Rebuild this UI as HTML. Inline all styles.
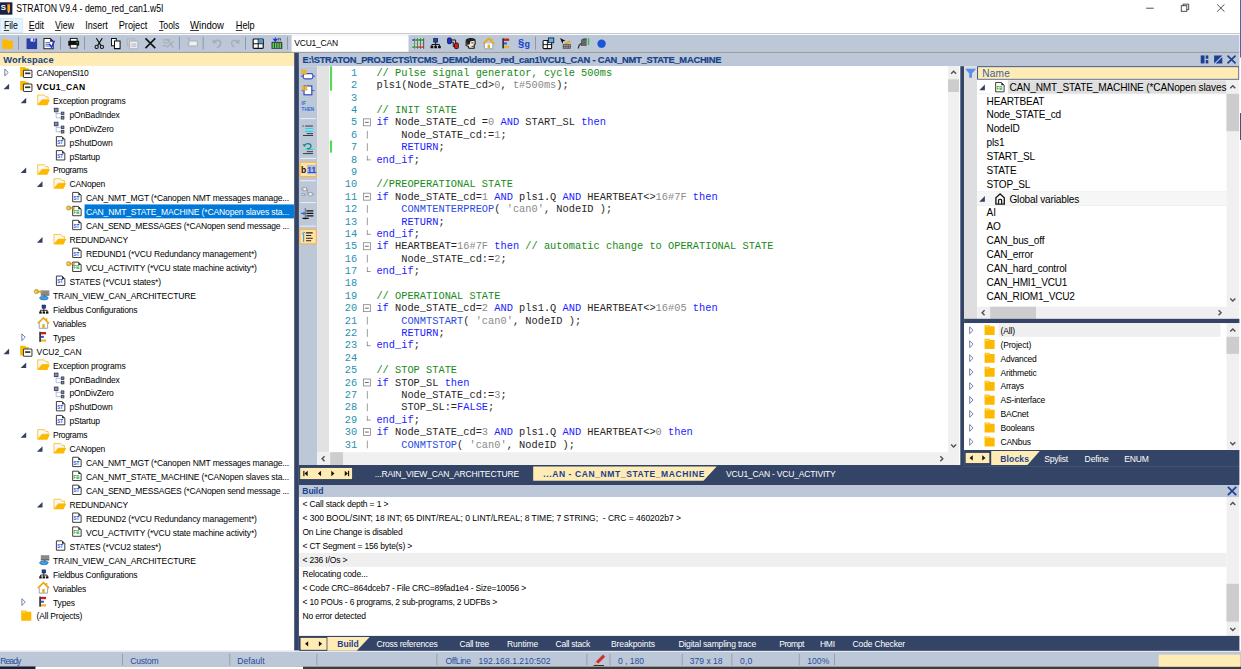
<!DOCTYPE html>
<html><head><meta charset="utf-8"><title>STRATON V9.4 - demo_red_can1.w5I</title>
<style>
html,body{margin:0;padding:0;background:#fff;overflow:hidden;}
body{width:1241px;height:669px;position:relative;font-family:"Liberation Sans",sans-serif;}
#root{position:absolute;left:0;top:0;width:1600px;height:864px;transform:scale(0.775625,0.774306);transform-origin:0 0;background:#fff;overflow:hidden;}
#root div,#root span.t,#root svg{position:absolute;box-sizing:border-box;}
#root svg{overflow:visible;}
span.t{white-space:pre;color:#000;}
.mono{font-family:"Liberation Mono",monospace;}
.ln,.cl{font-family:"Liberation Mono",monospace;font-size:13.33px;line-height:16px;height:16px;}
.ln{text-align:right;}
span.t.ln{color:#2b91af;}
.cl b{font-weight:normal;}
span.t.cl{color:#262626;}

</style></head><body><div id="root">
<svg style="left:0;top:0" width="1600" height="864" viewBox="0 0 1600 864">
<rect x="0.00" y="0.00" width="1600.00" height="23.25" fill="#fff"/>
<rect x="0.00" y="23.25" width="1600.00" height="19.50" fill="#fff"/>
<rect x="0.50" y="23.75" width="28.91" height="18.11" rx="0.0" fill="#e5f3ff" stroke="#cce8ff" stroke-width="1.0"/>
<rect x="0.00" y="42.75" width="1600.00" height="1.03" fill="#b4b4b4"/>
<rect x="0.00" y="43.78" width="1600.00" height="1.29" fill="#fff"/>
<rect x="0.00" y="45.07" width="1600.00" height="21.76" fill="#bcc7d8"/>
<rect x="0.00" y="66.83" width="1600.00" height="1.49" fill="#909090"/>
<rect x="375.95" y="45.46" width="150.72" height="21.37" fill="#fff"/>
<rect x="0.00" y="68.32" width="379.44" height="16.79" fill="#ffebb4"/>
<rect x="0.00" y="85.11" width="379.44" height="755.26" fill="#fff"/>
<rect x="379.31" y="68.32" width="6.06" height="772.05" fill="#334466"/>
<rect x="385.37" y="68.32" width="1214.63" height="17.31" fill="#bcc7d8"/>
<rect x="0.00" y="840.37" width="1600.00" height="20.53" fill="#bcc7d8"/>
<rect x="0.00" y="840.37" width="1600.00" height="1.42" fill="#eef1f6"/>
<rect x="0.00" y="860.90" width="1600.00" height="3.10" fill="#3c3c3c"/>
<rect x="0.00" y="860.90" width="45.77" height="3.10" fill="#14213d"/>
<rect x="45.77" y="860.90" width="344.88" height="3.10" fill="#fff"/>
<rect x="385.50" y="85.50" width="23.46" height="515.04" fill="#bcc7d8"/>
<rect x="408.96" y="85.50" width="15.47" height="498.51" fill="#e2e2e2"/>
<rect x="424.43" y="85.50" width="797.81" height="498.51" fill="#fff"/>
<rect x="425.33" y="85.63" width="2.84" height="31.48" fill="#5ad65a"/>
<rect x="425.33" y="181.50" width="2.84" height="15.61" fill="#5ad65a"/>
<rect x="1222.24" y="85.50" width="14.57" height="498.51" fill="#f0f0f0"/>
<rect x="1222.24" y="102.41" width="14.57" height="16.40" fill="#cdcdcd"/>
<rect x="408.96" y="584.01" width="827.85" height="16.53" fill="#f0f0f0"/>
<rect x="425.72" y="584.01" width="16.50" height="16.53" fill="#cdcdcd"/>
<rect x="1222.24" y="584.01" width="14.57" height="16.53" fill="#f0f0f0"/>
<rect x="1236.81" y="85.50" width="1.29" height="515.04" fill="#fff"/>
<rect x="1238.10" y="85.50" width="4.90" height="515.30" fill="#334466"/>
<rect x="1243.00" y="85.50" width="16.76" height="326.23" fill="#dedede"/>
<rect x="1260.36" y="86.10" width="336.85" height="16.36" rx="0.0" fill="#ffebb4" stroke="#2f4a86" stroke-width="1.2"/>
<rect x="1259.76" y="103.06" width="321.55" height="293.04" fill="#fff"/>
<rect x="1299.34" y="103.71" width="281.97" height="17.35" fill="#dfdfdf"/>
<rect x="1259.76" y="120.80" width="321.55" height="0.90" fill="#ececec"/>
<rect x="1259.76" y="247.71" width="321.55" height="18.00" fill="#f6f6f6"/>
<rect x="1259.76" y="246.80" width="321.55" height="0.90" fill="#ececec"/>
<rect x="1259.76" y="264.80" width="321.55" height="0.90" fill="#ececec"/>
<rect x="1581.31" y="103.06" width="16.50" height="293.04" fill="#f0f0f0"/>
<rect x="1581.31" y="121.14" width="16.50" height="48.30" fill="#cdcdcd"/>
<rect x="1259.76" y="396.10" width="338.05" height="15.63" fill="#f0f0f0"/>
<rect x="1276.65" y="396.10" width="59.05" height="15.63" fill="#cdcdcd"/>
<rect x="1243.00" y="411.72" width="357.00" height="5.68" fill="#334466"/>
<rect x="1243.00" y="417.41" width="338.31" height="163.24" fill="#fff"/>
<rect x="1287.61" y="417.41" width="285.96" height="17.61" fill="#efefef"/>
<rect x="1581.31" y="417.41" width="16.50" height="163.24" fill="#f0f0f0"/>
<rect x="1581.31" y="434.97" width="16.50" height="21.96" fill="#cdcdcd"/>
<rect x="1243.00" y="581.17" width="357.00" height="20.02" fill="#334466"/>
<rect x="1244.40" y="584.25" width="31.75" height="14.37" rx="0.0" fill="#ffebb4" stroke="#2a3550" stroke-width="1.0"/>
<rect x="385.50" y="600.54" width="1214.50" height="25.83" fill="#334466"/>
<rect x="1243.00" y="601.83" width="354.94" height="1.03" fill="#43557c"/>
<rect x="386.51" y="603.62" width="68.11" height="15.79" rx="0.0" fill="#ffebb4" stroke="#2a3550" stroke-width="1.0"/>
<rect x="385.50" y="626.37" width="1214.50" height="15.50" fill="#bcc7d8"/>
<rect x="385.50" y="641.87" width="1195.81" height="179.39" fill="#fff"/>
<rect x="385.50" y="713.99" width="1195.81" height="18.00" fill="#efefef"/>
<rect x="1581.31" y="641.87" width="16.50" height="179.39" fill="#f0f0f0"/>
<rect x="1581.31" y="753.97" width="16.50" height="48.82" fill="#cdcdcd"/>
<rect x="1597.81" y="625.85" width="2.19" height="195.40" fill="#fff"/>
<rect x="385.50" y="821.25" width="1214.50" height="19.24" fill="#334466"/>
<rect x="386.90" y="823.17" width="34.71" height="16.56" rx="0.0" fill="#ffebb4" stroke="#2a3550" stroke-width="1.0"/>
<rect x="157.55" y="844.11" width="1.03" height="15.24" fill="#8d97a8"/>
<rect x="295.76" y="844.11" width="1.03" height="15.24" fill="#8d97a8"/>
<rect x="408.06" y="844.11" width="1.03" height="15.24" fill="#8d97a8"/>
<rect x="562.77" y="844.11" width="1.03" height="15.24" fill="#8d97a8"/>
<rect x="756.16" y="844.11" width="1.03" height="15.24" fill="#8d97a8"/>
<rect x="785.95" y="844.11" width="1.03" height="15.24" fill="#8d97a8"/>
<rect x="879.03" y="844.11" width="1.03" height="15.24" fill="#8d97a8"/>
<rect x="943.11" y="844.11" width="1.03" height="15.24" fill="#8d97a8"/>
<rect x="1029.88" y="844.11" width="1.03" height="15.24" fill="#8d97a8"/>
<rect x="1075.52" y="844.11" width="1.03" height="15.24" fill="#8d97a8"/>
<rect x="1493.89" y="845.40" width="105.08" height="15.50" fill="#ffebb4"/>
<rect x="23.21" y="47.27" width="1.16" height="16.79" fill="#8a93a3"/>
<rect x="77.36" y="47.27" width="1.16" height="16.79" fill="#8a93a3"/>
<rect x="108.30" y="47.27" width="1.16" height="16.79" fill="#8a93a3"/>
<rect x="230.65" y="47.27" width="1.16" height="16.79" fill="#8a93a3"/>
<rect x="261.34" y="47.27" width="1.16" height="16.79" fill="#8a93a3"/>
<rect x="315.87" y="47.27" width="1.16" height="16.79" fill="#8a93a3"/>
<rect x="370.02" y="47.27" width="1.16" height="16.79" fill="#8a93a3"/>
<rect x="689.77" y="47.27" width="1.16" height="16.79" fill="#8a93a3"/>
<rect x="387.30" y="152.52" width="19.85" height="1.29" fill="#eef1f6"/>
<rect x="387.30" y="203.92" width="19.85" height="1.29" fill="#eef1f6"/>
<rect x="386.55" y="209.50" width="21.35" height="18.68" rx="2.0" fill="#ffe3a6" stroke="#f5b45a" stroke-width="1.6"/>
<rect x="387.30" y="232.72" width="19.85" height="1.29" fill="#eef1f6"/>
<rect x="387.30" y="261.01" width="19.85" height="1.29" fill="#eef1f6"/>
<rect x="387.30" y="291.36" width="19.85" height="1.29" fill="#eef1f6"/>
<rect x="386.55" y="296.29" width="21.35" height="18.55" rx="2.0" fill="#ffe3a6" stroke="#f5b45a" stroke-width="1.6"/>
<rect x="1597.94" y="43.91" width="2.06" height="796.58" fill="#fff"/>
<rect x="1598.97" y="0.00" width="1.03" height="74.26" fill="#1f3f8f"/>
<rect x="1598.97" y="145.94" width="1.03" height="34.87" fill="#1a2744"/>
</svg>
<svg style="left:0px;top:3px" width="16" height="16" viewBox="0 0 16 16"><rect width="16" height="16" fill="#1a2340"/><text x="1" y="10.5" font-family="Liberation Sans,sans-serif" font-weight="bold" font-size="10" fill="#fff">S</text><rect x="9.5" y="3" width="3.4" height="8" fill="#f5a81c"/><path d="M9.5 11h3.4l-1.7 3.5z" fill="#f3d9a0"/><rect x="9.5" y="2" width="3.4" height="1.6" fill="#e05a5a"/></svg>
<span class="t" style="left:20.89px;top:1.99px;font-size:13.6px;line-height:19px;transform:scaleX(0.8228);transform-origin:0 50%;">STRATON V9.4 - demo_red_can1.w5I</span>
<svg style="left:1471.1px;top:0" width="128.9" height="23" viewBox="0 0 100 18" preserveAspectRatio="none"><g stroke="#222" stroke-width="0.8" fill="none"><path d="M5.2 8.3h7.6"/><rect x="40.3" y="5.8" width="5.6" height="5.6"/><path d="M42.2 5.8v-1.6h5.6v5.6h-1.9"/><path d="M76.2 4.4l7.4 7.4M83.6 4.4l-7.4 7.4"/></g></svg>
<span class="t" style="left:4.64px;top:23.56px;font-size:13.6px;line-height:19px;transform:scaleX(0.8236);transform-origin:0 50%;"><u>F</u>ile</span>
<span class="t" style="left:37.13px;top:23.56px;font-size:13.6px;line-height:19px;transform:scaleX(0.8472);transform-origin:0 50%;"><u>E</u>dit</span>
<span class="t" style="left:71.17px;top:23.56px;font-size:13.6px;line-height:19px;transform:scaleX(0.8380);transform-origin:0 50%;"><u>V</u>iew</span>
<span class="t" style="left:110.36px;top:23.56px;font-size:13.6px;line-height:19px;transform:scaleX(0.8491);transform-origin:0 50%;">Insert</span>
<span class="t" style="left:153.17px;top:23.56px;font-size:13.6px;line-height:19px;transform:scaleX(0.8742);transform-origin:0 50%;">Project</span>
<span class="t" style="left:204.74px;top:23.56px;font-size:13.6px;line-height:19px;transform:scaleX(0.8284);transform-origin:0 50%;"><u>T</u>ools</span>
<span class="t" style="left:245.22px;top:23.56px;font-size:13.6px;line-height:19px;transform:scaleX(0.9062);transform-origin:0 50%;"><u>W</u>indow</span>
<span class="t" style="left:303.76px;top:23.56px;font-size:13.6px;line-height:19px;transform:scaleX(0.8712);transform-origin:0 50%;"><u>H</u>elp</span>
<span class="t" style="left:379.44px;top:48.29px;font-size:11px;line-height:15px;letter-spacing:-0.325px;">VCU1_CAN</span>
<span class="t" style="left:4.13px;top:68.73px;font-size:12px;line-height:17px;color:#15428b;font-weight:bold;letter-spacing:0.144px;">Workspace</span>
<svg style="left:4.38px;top:87.93px" width="10" height="12" viewBox="0 0 10 12"><path d="M2.2 1.2l4.4 4.4-4.4 4.4z" fill="#fff" stroke="#5a6c9c" stroke-width="1.1"/></svg>
<svg style="left:26.30px;top:85.33px" width="16" height="16" viewBox="0 0 16 16"><path d="M0 1.5h6.5l1 1.5h3.5v11H0z" fill="#fdb900"/><rect x="4.2" y="5.6" width="11" height="9.6" rx="1.2" fill="#fff" stroke="#3a3a3a" stroke-width="1.3"/><rect x="6.3" y="8.6" width="6.8" height="2.2" fill="#333"/></svg>
<span class="t" style="left:47.19px;top:86.83px;font-size:11px;line-height:15px;letter-spacing:-0.298px;">CANopenSI10</span>
<svg style="left:4.38px;top:105.53px" width="10" height="12" viewBox="0 0 10 12"><path d="M7.8 2.2v7.2H0.6z" fill="#33415f"/></svg>
<svg style="left:26.30px;top:103.33px" width="16" height="16" viewBox="0 0 16 16"><path d="M0 1.5h6.5l1 1.5h3.5v11H0z" fill="#fdb900"/><rect x="4.2" y="5.6" width="11" height="9.6" rx="1.2" fill="#fff" stroke="#3a3a3a" stroke-width="1.3"/><rect x="6.3" y="8.6" width="6.8" height="2.2" fill="#333"/></svg>
<span class="t" style="left:47.19px;top:104.83px;font-size:11px;line-height:15px;font-weight:bold;letter-spacing:0.485px;">VCU1_CAN</span>
<svg style="left:25.59px;top:123.53px" width="10" height="12" viewBox="0 0 10 12"><path d="M7.8 2.2v7.2H0.6z" fill="#33415f"/></svg>
<svg style="left:47.51px;top:121.33px" width="16" height="16" viewBox="0 0 16 16"><path d="M0.6 14.2V1.8h8.6l1.7 2.4h3.2v3.6H6.2z" fill="#f6f8fb" stroke="#fdc42c" stroke-width="1.2"/><path d="M0.4 14.8L6 7.7h10.4l-3.4 7.1z" fill="#fdb900"/></svg>
<span class="t" style="left:68.40px;top:122.83px;font-size:11px;line-height:15px;letter-spacing:-0.242px;">Exception programs</span>
<svg style="left:68.72px;top:139.33px" width="16" height="16" viewBox="0 0 16 16"><g fill="none" stroke="#8ea4dc" stroke-width="0.9"><path d="M3.4 4v9.2h6.4M3.4 7.6h6.4"/></g><rect x="1" y="0.8" width="4.8" height="4.6" fill="#7b8fc4" stroke="#333" stroke-width="1"/><rect x="10" y="5.8" width="3.4" height="3.4" fill="#7b8fc4" stroke="#333" stroke-width="1"/><rect x="10" y="11.4" width="3.4" height="3.4" fill="#7b8fc4" stroke="#333" stroke-width="1"/></svg>
<span class="t" style="left:89.61px;top:140.83px;font-size:11px;line-height:15px;letter-spacing:-0.232px;">pOnBadIndex</span>
<svg style="left:68.72px;top:157.33px" width="16" height="16" viewBox="0 0 16 16"><g fill="none" stroke="#8ea4dc" stroke-width="0.9"><path d="M3.4 4v9.2h6.4M3.4 7.6h6.4"/></g><rect x="1" y="0.8" width="4.8" height="4.6" fill="#7b8fc4" stroke="#333" stroke-width="1"/><rect x="10" y="5.8" width="3.4" height="3.4" fill="#7b8fc4" stroke="#333" stroke-width="1"/><rect x="10" y="11.4" width="3.4" height="3.4" fill="#7b8fc4" stroke="#333" stroke-width="1"/></svg>
<span class="t" style="left:89.61px;top:158.83px;font-size:11px;line-height:15px;letter-spacing:-0.244px;">pOnDivZero</span>
<svg style="left:68.72px;top:175.33px" width="16" height="16" viewBox="0 0 16 16"><path d="M3.7 1.5h7.4l3.5 3.5v8.6H3.7z" fill="#fff" stroke="#2e2e2e" stroke-width="1.2"/><path d="M10.9 1.5v3.7h3.7z" fill="#2e2e2e"/><text x="4.7" y="11.0" font-family="Liberation Sans,sans-serif" font-weight="bold" font-size="6.2" fill="#2a50d8" textLength="7.6" lengthAdjust="spacingAndGlyphs">ST</text></svg>
<span class="t" style="left:89.61px;top:176.83px;font-size:11px;line-height:15px;letter-spacing:-0.130px;">pShutDown</span>
<svg style="left:68.72px;top:193.33px" width="16" height="16" viewBox="0 0 16 16"><path d="M3.7 1.5h7.4l3.5 3.5v8.6H3.7z" fill="#fff" stroke="#2e2e2e" stroke-width="1.2"/><path d="M10.9 1.5v3.7h3.7z" fill="#2e2e2e"/><text x="4.7" y="11.0" font-family="Liberation Sans,sans-serif" font-weight="bold" font-size="6.2" fill="#2a50d8" textLength="7.6" lengthAdjust="spacingAndGlyphs">ST</text></svg>
<span class="t" style="left:89.61px;top:194.83px;font-size:11px;line-height:15px;letter-spacing:-0.331px;">pStartup</span>
<svg style="left:25.59px;top:213.53px" width="10" height="12" viewBox="0 0 10 12"><path d="M7.8 2.2v7.2H0.6z" fill="#33415f"/></svg>
<svg style="left:47.51px;top:211.33px" width="16" height="16" viewBox="0 0 16 16"><path d="M0.6 14.2V1.8h8.6l1.7 2.4h3.2v3.6H6.2z" fill="#f6f8fb" stroke="#fdc42c" stroke-width="1.2"/><path d="M0.4 14.8L6 7.7h10.4l-3.4 7.1z" fill="#fdb900"/></svg>
<span class="t" style="left:68.40px;top:212.83px;font-size:11px;line-height:15px;letter-spacing:-0.465px;">Programs</span>
<svg style="left:46.80px;top:231.53px" width="10" height="12" viewBox="0 0 10 12"><path d="M7.8 2.2v7.2H0.6z" fill="#33415f"/></svg>
<svg style="left:68.72px;top:229.33px" width="16" height="16" viewBox="0 0 16 16"><path d="M0.6 14.2V1.8h8.6l1.7 2.4h3.2v3.6H6.2z" fill="#f6f8fb" stroke="#fdc42c" stroke-width="1.2"/><path d="M0.4 14.8L6 7.7h10.4l-3.4 7.1z" fill="#fdb900"/></svg>
<span class="t" style="left:89.61px;top:230.83px;font-size:11px;line-height:15px;letter-spacing:-0.257px;">CANopen</span>
<svg style="left:89.93px;top:247.33px" width="16" height="16" viewBox="0 0 16 16"><path d="M3.7 1.5h7.4l3.5 3.5v8.6H3.7z" fill="#fff" stroke="#2e2e2e" stroke-width="1.2"/><path d="M10.9 1.5v3.7h3.7z" fill="#2e2e2e"/><text x="4.7" y="11.0" font-family="Liberation Sans,sans-serif" font-weight="bold" font-size="6.2" fill="#2a50d8" textLength="7.6" lengthAdjust="spacingAndGlyphs">ST</text></svg>
<span class="t" style="left:110.81px;top:248.83px;font-size:11px;line-height:15px;letter-spacing:-0.212px;">CAN_NMT_MGT (*Canopen NMT messages manage...</span>
<div style="left:108.51px;top:264.33px;width:270.92px;height:18px;background:#0078d7;"></div>
<svg style="left:84.93px;top:265.33px" width="21" height="16" viewBox="-5 0 21 16"><path d="M3.7 1.5h7.4l3.5 3.5v8.6H3.7z" fill="#fff" stroke="#2e2e2e" stroke-width="1.2"/><path d="M10.9 1.5v3.7h3.7z" fill="#2e2e2e"/><text x="4.7" y="11.0" font-family="Liberation Sans,sans-serif" font-weight="bold" font-size="6.2" fill="#28a428" textLength="7.6" lengthAdjust="spacingAndGlyphs">FB</text><g fill="#e2b32a" stroke="#a8821a" stroke-width="0.5"><circle cx="-1.6" cy="3.6" r="2.9"/><path d="M1 2.9h5.2v1.4H5.4v1.5H4.2V4.3H1z"/></g><circle cx="-2.3" cy="3.6" r="0.9" fill="#fff3c8"/></svg>
<span class="t" style="left:110.81px;top:266.83px;font-size:11px;line-height:15px;color:#fff;letter-spacing:-0.179px;">CAN_NMT_STATE_MACHINE (*CANopen slaves sta...</span>
<svg style="left:89.93px;top:283.33px" width="16" height="16" viewBox="0 0 16 16"><path d="M3.7 1.5h7.4l3.5 3.5v8.6H3.7z" fill="#fff" stroke="#2e2e2e" stroke-width="1.2"/><path d="M10.9 1.5v3.7h3.7z" fill="#2e2e2e"/><text x="4.7" y="11.0" font-family="Liberation Sans,sans-serif" font-weight="bold" font-size="6.2" fill="#2a50d8" textLength="7.6" lengthAdjust="spacingAndGlyphs">ST</text></svg>
<span class="t" style="left:110.81px;top:284.83px;font-size:11px;line-height:15px;letter-spacing:-0.263px;">CAN_SEND_MESSAGES (*CANopen send message ...</span>
<svg style="left:46.80px;top:303.53px" width="10" height="12" viewBox="0 0 10 12"><path d="M7.8 2.2v7.2H0.6z" fill="#33415f"/></svg>
<svg style="left:68.72px;top:301.33px" width="16" height="16" viewBox="0 0 16 16"><path d="M0.6 14.2V1.8h8.6l1.7 2.4h3.2v3.6H6.2z" fill="#f6f8fb" stroke="#fdc42c" stroke-width="1.2"/><path d="M0.4 14.8L6 7.7h10.4l-3.4 7.1z" fill="#fdb900"/></svg>
<span class="t" style="left:89.61px;top:302.83px;font-size:11px;line-height:15px;letter-spacing:-0.220px;">REDUNDANCY</span>
<svg style="left:89.93px;top:319.33px" width="16" height="16" viewBox="0 0 16 16"><path d="M3.7 1.5h7.4l3.5 3.5v8.6H3.7z" fill="#fff" stroke="#2e2e2e" stroke-width="1.2"/><path d="M10.9 1.5v3.7h3.7z" fill="#2e2e2e"/><text x="4.7" y="11.0" font-family="Liberation Sans,sans-serif" font-weight="bold" font-size="6.2" fill="#2a50d8" textLength="7.6" lengthAdjust="spacingAndGlyphs">ST</text></svg>
<span class="t" style="left:110.81px;top:320.83px;font-size:11px;line-height:15px;letter-spacing:-0.195px;">REDUND1 (*VCU Redundancy management*)</span>
<svg style="left:84.93px;top:337.33px" width="21" height="16" viewBox="-5 0 21 16"><path d="M3.7 1.5h7.4l3.5 3.5v8.6H3.7z" fill="#fff" stroke="#2e2e2e" stroke-width="1.2"/><path d="M10.9 1.5v3.7h3.7z" fill="#2e2e2e"/><text x="4.7" y="11.0" font-family="Liberation Sans,sans-serif" font-weight="bold" font-size="6.2" fill="#28a428" textLength="7.6" lengthAdjust="spacingAndGlyphs">FB</text><g fill="#e2b32a" stroke="#a8821a" stroke-width="0.5"><circle cx="-1.6" cy="3.6" r="2.9"/><path d="M1 2.9h5.2v1.4H5.4v1.5H4.2V4.3H1z"/></g><circle cx="-2.3" cy="3.6" r="0.9" fill="#fff3c8"/></svg>
<span class="t" style="left:110.81px;top:338.83px;font-size:11px;line-height:15px;letter-spacing:-0.205px;">VCU_ACTIVITY (*VCU state machine activity*)</span>
<svg style="left:68.72px;top:355.33px" width="16" height="16" viewBox="0 0 16 16"><path d="M3.7 1.5h7.4l3.5 3.5v8.6H3.7z" fill="#fff" stroke="#2e2e2e" stroke-width="1.2"/><path d="M10.9 1.5v3.7h3.7z" fill="#2e2e2e"/><text x="4.7" y="11.0" font-family="Liberation Sans,sans-serif" font-weight="bold" font-size="6.2" fill="#2a50d8" textLength="7.6" lengthAdjust="spacingAndGlyphs">ST</text></svg>
<span class="t" style="left:89.61px;top:356.83px;font-size:11px;line-height:15px;letter-spacing:-0.182px;">STATES (*VCU1 states*)</span>
<svg style="left:42.51px;top:373.33px" width="21" height="16" viewBox="-5 0 21 16"><rect x="4.6" y="2" width="11" height="5.4" fill="#8a8a8a"/><path d="M4.6 7.4h11v1.3h-11z" fill="#333"/><path d="M9.6 8.6v2" stroke="#333" stroke-width="1.4"/><ellipse cx="8.6" cy="11.9" rx="5.6" ry="2.4" fill="#3aa0e8" stroke="#1f5fa8" stroke-width="0.8"/><g transform="translate(0.5,0)"><g fill="#e2b32a" stroke="#a8821a" stroke-width="0.5"><circle cx="-1.6" cy="3.6" r="2.9"/><path d="M1 2.9h5.2v1.4H5.4v1.5H4.2V4.3H1z"/></g><circle cx="-2.3" cy="3.6" r="0.9" fill="#fff3c8"/></g></svg>
<span class="t" style="left:68.40px;top:374.83px;font-size:11px;line-height:15px;letter-spacing:-0.176px;">TRAIN_VIEW_CAN_ARCHITECTURE</span>
<svg style="left:47.51px;top:391.33px" width="16" height="16" viewBox="0 0 16 16"><g transform="translate(2.1,2.2) scale(0.8)"><rect x="5.2" y="1" width="5.6" height="5" fill="#1d3fd0" stroke="#111" stroke-width="1"/><path d="M8 6v3.2M2.6 12V9.4h10.8V12M8 9.4V12" stroke="#111" stroke-width="1.4" fill="none"/><rect x="0.6" y="11.4" width="4" height="3.4" fill="#111"/><rect x="6" y="11.4" width="4" height="3.4" fill="#111"/><rect x="11.4" y="11.4" width="4" height="3.4" fill="#111"/></g></svg>
<span class="t" style="left:68.40px;top:392.83px;font-size:11px;line-height:15px;letter-spacing:-0.305px;">Fieldbus Configurations</span>
<svg style="left:47.51px;top:409.33px" width="16" height="16" viewBox="0 0 16 16"><path d="M2.6 8.2V15h10.8V8.2" fill="#fff" stroke="#8a96a8" stroke-width="1.1"/><path d="M0.8 8.6L8 1.6l7.2 7" fill="none" stroke="#e9a818" stroke-width="2.2" stroke-linejoin="miter"/><rect x="11" y="2" width="2" height="3.4" fill="#e9a818"/><rect x="6.6" y="9.6" width="3" height="5" fill="#e9a818"/></svg>
<span class="t" style="left:68.40px;top:410.83px;font-size:11px;line-height:15px;letter-spacing:-0.292px;">Variables</span>
<svg style="left:25.59px;top:429.93px" width="10" height="12" viewBox="0 0 10 12"><path d="M2.2 1.2l4.4 4.4-4.4 4.4z" fill="#fff" stroke="#5a6c9c" stroke-width="1.1"/></svg>
<svg style="left:47.51px;top:427.33px" width="16" height="16" viewBox="0 0 16 16"><rect x="2.6" y="1.5" width="2.2" height="13" fill="#333"/><rect x="4.8" y="1.8" width="6.6" height="3" fill="#c81e1e"/><rect x="4.8" y="6.8" width="3.8" height="2.6" fill="#2a5ad8"/><rect x="4.8" y="11.4" width="6.6" height="2.8" fill="#f0b428"/></svg>
<span class="t" style="left:68.40px;top:428.83px;font-size:11px;line-height:15px;letter-spacing:-0.223px;">Types</span>
<svg style="left:4.38px;top:447.53px" width="10" height="12" viewBox="0 0 10 12"><path d="M7.8 2.2v7.2H0.6z" fill="#33415f"/></svg>
<svg style="left:26.30px;top:445.33px" width="16" height="16" viewBox="0 0 16 16"><path d="M0 1.5h6.5l1 1.5h3.5v11H0z" fill="#fdb900"/><rect x="4.2" y="5.6" width="11" height="9.6" rx="1.2" fill="#fff" stroke="#3a3a3a" stroke-width="1.3"/><rect x="6.3" y="8.6" width="6.8" height="2.2" fill="#333"/></svg>
<span class="t" style="left:47.19px;top:446.83px;font-size:11px;line-height:15px;letter-spacing:-0.084px;">VCU2_CAN</span>
<svg style="left:25.59px;top:465.53px" width="10" height="12" viewBox="0 0 10 12"><path d="M7.8 2.2v7.2H0.6z" fill="#33415f"/></svg>
<svg style="left:47.51px;top:463.33px" width="16" height="16" viewBox="0 0 16 16"><path d="M0.6 14.2V1.8h8.6l1.7 2.4h3.2v3.6H6.2z" fill="#f6f8fb" stroke="#fdc42c" stroke-width="1.2"/><path d="M0.4 14.8L6 7.7h10.4l-3.4 7.1z" fill="#fdb900"/></svg>
<span class="t" style="left:68.40px;top:464.83px;font-size:11px;line-height:15px;letter-spacing:-0.242px;">Exception programs</span>
<svg style="left:68.72px;top:481.33px" width="16" height="16" viewBox="0 0 16 16"><g fill="none" stroke="#8ea4dc" stroke-width="0.9"><path d="M3.4 4v9.2h6.4M3.4 7.6h6.4"/></g><rect x="1" y="0.8" width="4.8" height="4.6" fill="#7b8fc4" stroke="#333" stroke-width="1"/><rect x="10" y="5.8" width="3.4" height="3.4" fill="#7b8fc4" stroke="#333" stroke-width="1"/><rect x="10" y="11.4" width="3.4" height="3.4" fill="#7b8fc4" stroke="#333" stroke-width="1"/></svg>
<span class="t" style="left:89.61px;top:482.83px;font-size:11px;line-height:15px;letter-spacing:-0.232px;">pOnBadIndex</span>
<svg style="left:68.72px;top:499.33px" width="16" height="16" viewBox="0 0 16 16"><g fill="none" stroke="#8ea4dc" stroke-width="0.9"><path d="M3.4 4v9.2h6.4M3.4 7.6h6.4"/></g><rect x="1" y="0.8" width="4.8" height="4.6" fill="#7b8fc4" stroke="#333" stroke-width="1"/><rect x="10" y="5.8" width="3.4" height="3.4" fill="#7b8fc4" stroke="#333" stroke-width="1"/><rect x="10" y="11.4" width="3.4" height="3.4" fill="#7b8fc4" stroke="#333" stroke-width="1"/></svg>
<span class="t" style="left:89.61px;top:500.83px;font-size:11px;line-height:15px;letter-spacing:-0.244px;">pOnDivZero</span>
<svg style="left:68.72px;top:517.33px" width="16" height="16" viewBox="0 0 16 16"><path d="M3.7 1.5h7.4l3.5 3.5v8.6H3.7z" fill="#fff" stroke="#2e2e2e" stroke-width="1.2"/><path d="M10.9 1.5v3.7h3.7z" fill="#2e2e2e"/><text x="4.7" y="11.0" font-family="Liberation Sans,sans-serif" font-weight="bold" font-size="6.2" fill="#2a50d8" textLength="7.6" lengthAdjust="spacingAndGlyphs">ST</text></svg>
<span class="t" style="left:89.61px;top:518.83px;font-size:11px;line-height:15px;letter-spacing:-0.130px;">pShutDown</span>
<svg style="left:68.72px;top:535.33px" width="16" height="16" viewBox="0 0 16 16"><path d="M3.7 1.5h7.4l3.5 3.5v8.6H3.7z" fill="#fff" stroke="#2e2e2e" stroke-width="1.2"/><path d="M10.9 1.5v3.7h3.7z" fill="#2e2e2e"/><text x="4.7" y="11.0" font-family="Liberation Sans,sans-serif" font-weight="bold" font-size="6.2" fill="#2a50d8" textLength="7.6" lengthAdjust="spacingAndGlyphs">ST</text></svg>
<span class="t" style="left:89.61px;top:536.83px;font-size:11px;line-height:15px;letter-spacing:-0.331px;">pStartup</span>
<svg style="left:25.59px;top:555.53px" width="10" height="12" viewBox="0 0 10 12"><path d="M7.8 2.2v7.2H0.6z" fill="#33415f"/></svg>
<svg style="left:47.51px;top:553.33px" width="16" height="16" viewBox="0 0 16 16"><path d="M0.6 14.2V1.8h8.6l1.7 2.4h3.2v3.6H6.2z" fill="#f6f8fb" stroke="#fdc42c" stroke-width="1.2"/><path d="M0.4 14.8L6 7.7h10.4l-3.4 7.1z" fill="#fdb900"/></svg>
<span class="t" style="left:68.40px;top:554.83px;font-size:11px;line-height:15px;letter-spacing:-0.465px;">Programs</span>
<svg style="left:46.80px;top:573.53px" width="10" height="12" viewBox="0 0 10 12"><path d="M7.8 2.2v7.2H0.6z" fill="#33415f"/></svg>
<svg style="left:68.72px;top:571.33px" width="16" height="16" viewBox="0 0 16 16"><path d="M0.6 14.2V1.8h8.6l1.7 2.4h3.2v3.6H6.2z" fill="#f6f8fb" stroke="#fdc42c" stroke-width="1.2"/><path d="M0.4 14.8L6 7.7h10.4l-3.4 7.1z" fill="#fdb900"/></svg>
<span class="t" style="left:89.61px;top:572.83px;font-size:11px;line-height:15px;letter-spacing:-0.257px;">CANopen</span>
<svg style="left:89.93px;top:589.33px" width="16" height="16" viewBox="0 0 16 16"><path d="M3.7 1.5h7.4l3.5 3.5v8.6H3.7z" fill="#fff" stroke="#2e2e2e" stroke-width="1.2"/><path d="M10.9 1.5v3.7h3.7z" fill="#2e2e2e"/><text x="4.7" y="11.0" font-family="Liberation Sans,sans-serif" font-weight="bold" font-size="6.2" fill="#2a50d8" textLength="7.6" lengthAdjust="spacingAndGlyphs">ST</text></svg>
<span class="t" style="left:110.81px;top:590.83px;font-size:11px;line-height:15px;letter-spacing:-0.212px;">CAN_NMT_MGT (*Canopen NMT messages manage...</span>
<svg style="left:89.93px;top:607.33px" width="16" height="16" viewBox="0 0 16 16"><path d="M3.7 1.5h7.4l3.5 3.5v8.6H3.7z" fill="#fff" stroke="#2e2e2e" stroke-width="1.2"/><path d="M10.9 1.5v3.7h3.7z" fill="#2e2e2e"/><text x="4.7" y="11.0" font-family="Liberation Sans,sans-serif" font-weight="bold" font-size="6.2" fill="#28a428" textLength="7.6" lengthAdjust="spacingAndGlyphs">FB</text></svg>
<span class="t" style="left:110.81px;top:608.83px;font-size:11px;line-height:15px;letter-spacing:-0.179px;">CAN_NMT_STATE_MACHINE (*CANopen slaves sta...</span>
<svg style="left:89.93px;top:625.33px" width="16" height="16" viewBox="0 0 16 16"><path d="M3.7 1.5h7.4l3.5 3.5v8.6H3.7z" fill="#fff" stroke="#2e2e2e" stroke-width="1.2"/><path d="M10.9 1.5v3.7h3.7z" fill="#2e2e2e"/><text x="4.7" y="11.0" font-family="Liberation Sans,sans-serif" font-weight="bold" font-size="6.2" fill="#2a50d8" textLength="7.6" lengthAdjust="spacingAndGlyphs">ST</text></svg>
<span class="t" style="left:110.81px;top:626.83px;font-size:11px;line-height:15px;letter-spacing:-0.263px;">CAN_SEND_MESSAGES (*CANopen send message ...</span>
<svg style="left:46.80px;top:645.53px" width="10" height="12" viewBox="0 0 10 12"><path d="M7.8 2.2v7.2H0.6z" fill="#33415f"/></svg>
<svg style="left:68.72px;top:643.33px" width="16" height="16" viewBox="0 0 16 16"><path d="M0.6 14.2V1.8h8.6l1.7 2.4h3.2v3.6H6.2z" fill="#f6f8fb" stroke="#fdc42c" stroke-width="1.2"/><path d="M0.4 14.8L6 7.7h10.4l-3.4 7.1z" fill="#fdb900"/></svg>
<span class="t" style="left:89.61px;top:644.83px;font-size:11px;line-height:15px;letter-spacing:-0.220px;">REDUNDANCY</span>
<svg style="left:89.93px;top:661.33px" width="16" height="16" viewBox="0 0 16 16"><path d="M3.7 1.5h7.4l3.5 3.5v8.6H3.7z" fill="#fff" stroke="#2e2e2e" stroke-width="1.2"/><path d="M10.9 1.5v3.7h3.7z" fill="#2e2e2e"/><text x="4.7" y="11.0" font-family="Liberation Sans,sans-serif" font-weight="bold" font-size="6.2" fill="#2a50d8" textLength="7.6" lengthAdjust="spacingAndGlyphs">ST</text></svg>
<span class="t" style="left:110.81px;top:662.83px;font-size:11px;line-height:15px;letter-spacing:-0.195px;">REDUND2 (*VCU Redundancy management*)</span>
<svg style="left:89.93px;top:679.33px" width="16" height="16" viewBox="0 0 16 16"><path d="M3.7 1.5h7.4l3.5 3.5v8.6H3.7z" fill="#fff" stroke="#2e2e2e" stroke-width="1.2"/><path d="M10.9 1.5v3.7h3.7z" fill="#2e2e2e"/><text x="4.7" y="11.0" font-family="Liberation Sans,sans-serif" font-weight="bold" font-size="6.2" fill="#28a428" textLength="7.6" lengthAdjust="spacingAndGlyphs">FB</text></svg>
<span class="t" style="left:110.81px;top:680.83px;font-size:11px;line-height:15px;letter-spacing:-0.205px;">VCU_ACTIVITY (*VCU state machine activity*)</span>
<svg style="left:68.72px;top:697.33px" width="16" height="16" viewBox="0 0 16 16"><path d="M3.7 1.5h7.4l3.5 3.5v8.6H3.7z" fill="#fff" stroke="#2e2e2e" stroke-width="1.2"/><path d="M10.9 1.5v3.7h3.7z" fill="#2e2e2e"/><text x="4.7" y="11.0" font-family="Liberation Sans,sans-serif" font-weight="bold" font-size="6.2" fill="#2a50d8" textLength="7.6" lengthAdjust="spacingAndGlyphs">ST</text></svg>
<span class="t" style="left:89.61px;top:698.83px;font-size:11px;line-height:15px;letter-spacing:-0.182px;">STATES (*VCU2 states*)</span>
<svg style="left:47.51px;top:715.33px" width="16" height="16" viewBox="0 0 16 16"><rect x="4.6" y="2" width="11" height="5.4" fill="#8a8a8a"/><path d="M4.6 7.4h11v1.3h-11z" fill="#333"/><path d="M9.6 8.6v2" stroke="#333" stroke-width="1.4"/><ellipse cx="8.6" cy="11.9" rx="5.6" ry="2.4" fill="#3aa0e8" stroke="#1f5fa8" stroke-width="0.8"/></svg>
<span class="t" style="left:68.40px;top:716.83px;font-size:11px;line-height:15px;letter-spacing:-0.176px;">TRAIN_VIEW_CAN_ARCHITECTURE</span>
<svg style="left:47.51px;top:733.33px" width="16" height="16" viewBox="0 0 16 16"><g transform="translate(2.1,2.2) scale(0.8)"><rect x="5.2" y="1" width="5.6" height="5" fill="#1d3fd0" stroke="#111" stroke-width="1"/><path d="M8 6v3.2M2.6 12V9.4h10.8V12M8 9.4V12" stroke="#111" stroke-width="1.4" fill="none"/><rect x="0.6" y="11.4" width="4" height="3.4" fill="#111"/><rect x="6" y="11.4" width="4" height="3.4" fill="#111"/><rect x="11.4" y="11.4" width="4" height="3.4" fill="#111"/></g></svg>
<span class="t" style="left:68.40px;top:734.83px;font-size:11px;line-height:15px;letter-spacing:-0.305px;">Fieldbus Configurations</span>
<svg style="left:47.51px;top:751.33px" width="16" height="16" viewBox="0 0 16 16"><path d="M2.6 8.2V15h10.8V8.2" fill="#fff" stroke="#8a96a8" stroke-width="1.1"/><path d="M0.8 8.6L8 1.6l7.2 7" fill="none" stroke="#e9a818" stroke-width="2.2" stroke-linejoin="miter"/><rect x="11" y="2" width="2" height="3.4" fill="#e9a818"/><rect x="6.6" y="9.6" width="3" height="5" fill="#e9a818"/></svg>
<span class="t" style="left:68.40px;top:752.83px;font-size:11px;line-height:15px;letter-spacing:-0.292px;">Variables</span>
<svg style="left:25.59px;top:771.93px" width="10" height="12" viewBox="0 0 10 12"><path d="M2.2 1.2l4.4 4.4-4.4 4.4z" fill="#fff" stroke="#5a6c9c" stroke-width="1.1"/></svg>
<svg style="left:47.51px;top:769.33px" width="16" height="16" viewBox="0 0 16 16"><rect x="2.6" y="1.5" width="2.2" height="13" fill="#333"/><rect x="4.8" y="1.8" width="6.6" height="3" fill="#c81e1e"/><rect x="4.8" y="6.8" width="3.8" height="2.6" fill="#2a5ad8"/><rect x="4.8" y="11.4" width="6.6" height="2.8" fill="#f0b428"/></svg>
<span class="t" style="left:68.40px;top:770.83px;font-size:11px;line-height:15px;letter-spacing:-0.223px;">Types</span>
<svg style="left:26.30px;top:787.33px" width="16" height="16" viewBox="0 0 16 16"><path d="M1.4 1.6h6.2l1 1.6h5.8v11.4H1.4z" fill="#fdb900"/><rect x="2.6" y="2.6" width="4.4" height="1.4" fill="#fde08a"/></svg>
<span class="t" style="left:47.19px;top:788.83px;font-size:11px;line-height:15px;letter-spacing:-0.263px;">(All Projects)</span>
<span class="t" style="left:390.01px;top:68.60px;font-size:12px;line-height:17px;color:#15428b;font-weight:bold;letter-spacing:-0.299px;-webkit-text-stroke:0.25px #15428b;">E:\STRATON_PROJECTS\TCMS_DEMO\demo_red_can1\VCU1_CAN - CAN_NMT_STATE_MACHINE</span>
<svg style="left:1545.85px;top:68.97px" width="54.15" height="16.53" viewBox="1199 53.4 42 12.8"><g fill="#1c3f94"><rect x="1200.6" y="55.4" width="3.8" height="8"/><rect x="1205.6" y="55.4" width="2.6" height="3.4"/><rect x="1205.6" y="60" width="2.6" height="3.4"/><path d="M1214 55.4h8.2l-8.2 8zM1222.2 57v6.4h-6.6z"/></g><path d="M1227.4 55.6l8 7.8M1235.4 55.6l-8 7.8" stroke="#1c3f94" stroke-width="1.6" fill="none"/></svg>
<span class="t ln" style="left:420.53px;top:87.00px;width:40px;">1</span>
<span class="t cl" style="left:485.29px;top:87.00px;"><b style="color:#168a16">// Pulse signal generator, cycle 500ms</b></span>
<span class="t ln" style="left:420.53px;top:103.00px;width:40px;">2</span>
<span class="t cl" style="left:485.29px;top:103.00px;">pls1(Node_STATE_cd&gt;<b style="color:#8a8a8a">0</b>, <b style="color:#8a8a8a">t#500ms</b>);</span>
<span class="t ln" style="left:420.53px;top:119.00px;width:40px;">3</span>
<span class="t ln" style="left:420.53px;top:135.00px;width:40px;">4</span>
<span class="t cl" style="left:485.29px;top:135.00px;"><b style="color:#168a16">// INIT STATE</b></span>
<span class="t ln" style="left:420.53px;top:151.00px;width:40px;">5</span>
<svg style="left:468.04px;top:152.60px" width="10" height="10" viewBox="0 0 10 10"><rect x="0.5" y="0.5" width="9" height="9" fill="#fff" stroke="#808080"/><path d="M2.5 5h5" stroke="#404040" stroke-width="1"/></svg>
<span class="t cl" style="left:485.29px;top:151.00px;"><b style="color:#1c1cff">if</b> Node_STATE_cd =<b style="color:#8a8a8a">0</b> <b style="color:#1c1cff">AND</b> START_SL <b style="color:#1c1cff">then</b></span>
<span class="t ln" style="left:420.53px;top:167.00px;width:40px;">6</span>
<div style="left:472.54px;top:169.00px;width:1px;height:10px;background:#808080;"></div>
<span class="t cl" style="left:485.29px;top:167.00px;">    Node_STATE_cd:=<b style="color:#8a8a8a">1</b>;</span>
<span class="t ln" style="left:420.53px;top:183.00px;width:40px;">7</span>
<div style="left:472.54px;top:185.00px;width:1px;height:10px;background:#808080;"></div>
<span class="t cl" style="left:485.29px;top:183.00px;">    <b style="color:#1c1cff">RETURN</b>;</span>
<span class="t ln" style="left:420.53px;top:199.00px;width:40px;">8</span>
<div style="left:472.54px;top:201.00px;width:1px;height:6px;background:#808080;"></div>
<div style="left:472.54px;top:206.00px;width:5px;height:1px;background:#808080;"></div>
<span class="t cl" style="left:485.29px;top:199.00px;"><b style="color:#1c1cff">end_if</b>;</span>
<span class="t ln" style="left:420.53px;top:215.00px;width:40px;">9</span>
<span class="t ln" style="left:420.53px;top:231.00px;width:40px;">10</span>
<span class="t cl" style="left:485.29px;top:231.00px;"><b style="color:#168a16">//PREOPERATIONAL STATE</b></span>
<span class="t ln" style="left:420.53px;top:247.00px;width:40px;">11</span>
<svg style="left:468.04px;top:248.60px" width="10" height="10" viewBox="0 0 10 10"><rect x="0.5" y="0.5" width="9" height="9" fill="#fff" stroke="#808080"/><path d="M2.5 5h5" stroke="#404040" stroke-width="1"/></svg>
<span class="t cl" style="left:485.29px;top:247.00px;"><b style="color:#1c1cff">if</b> Node_STATE_cd=<b style="color:#8a8a8a">1</b> <b style="color:#1c1cff">AND</b> pls1.Q <b style="color:#1c1cff">AND</b> HEARTBEAT&lt;&gt;<b style="color:#8a8a8a">16#7F</b> <b style="color:#1c1cff">then</b></span>
<span class="t ln" style="left:420.53px;top:263.00px;width:40px;">12</span>
<div style="left:472.54px;top:265.00px;width:1px;height:10px;background:#808080;"></div>
<span class="t cl" style="left:485.29px;top:263.00px;">    <b style="color:#2a4ae4">CONMTENTERPREOP</b>( <b style="color:#8a8a8a">'can0'</b>, NodeID );</span>
<span class="t ln" style="left:420.53px;top:279.00px;width:40px;">13</span>
<div style="left:472.54px;top:281.00px;width:1px;height:10px;background:#808080;"></div>
<span class="t cl" style="left:485.29px;top:279.00px;">    <b style="color:#1c1cff">RETURN</b>;</span>
<span class="t ln" style="left:420.53px;top:295.00px;width:40px;">14</span>
<div style="left:472.54px;top:297.00px;width:1px;height:6px;background:#808080;"></div>
<div style="left:472.54px;top:302.00px;width:5px;height:1px;background:#808080;"></div>
<span class="t cl" style="left:485.29px;top:295.00px;"><b style="color:#1c1cff">end_if</b>;</span>
<span class="t ln" style="left:420.53px;top:311.00px;width:40px;">15</span>
<svg style="left:468.04px;top:312.60px" width="10" height="10" viewBox="0 0 10 10"><rect x="0.5" y="0.5" width="9" height="9" fill="#fff" stroke="#808080"/><path d="M2.5 5h5" stroke="#404040" stroke-width="1"/></svg>
<span class="t cl" style="left:485.29px;top:311.00px;"><b style="color:#1c1cff">if</b> HEARTBEAT=<b style="color:#8a8a8a">16#7F</b> <b style="color:#1c1cff">then</b> <b style="color:#168a16">// automatic change to OPERATIONAL STATE</b></span>
<span class="t ln" style="left:420.53px;top:327.00px;width:40px;">16</span>
<div style="left:472.54px;top:329.00px;width:1px;height:10px;background:#808080;"></div>
<span class="t cl" style="left:485.29px;top:327.00px;">    Node_STATE_cd:=<b style="color:#8a8a8a">2</b>;</span>
<span class="t ln" style="left:420.53px;top:343.00px;width:40px;">17</span>
<div style="left:472.54px;top:345.00px;width:1px;height:6px;background:#808080;"></div>
<div style="left:472.54px;top:350.00px;width:5px;height:1px;background:#808080;"></div>
<span class="t cl" style="left:485.29px;top:343.00px;"><b style="color:#1c1cff">end_if</b>;</span>
<span class="t ln" style="left:420.53px;top:359.00px;width:40px;">18</span>
<span class="t ln" style="left:420.53px;top:375.00px;width:40px;">19</span>
<span class="t cl" style="left:485.29px;top:375.00px;"><b style="color:#168a16">// OPERATIONAL STATE</b></span>
<span class="t ln" style="left:420.53px;top:391.00px;width:40px;">20</span>
<svg style="left:468.04px;top:392.60px" width="10" height="10" viewBox="0 0 10 10"><rect x="0.5" y="0.5" width="9" height="9" fill="#fff" stroke="#808080"/><path d="M2.5 5h5" stroke="#404040" stroke-width="1"/></svg>
<span class="t cl" style="left:485.29px;top:391.00px;"><b style="color:#1c1cff">if</b> Node_STATE_cd=<b style="color:#8a8a8a">2</b> <b style="color:#1c1cff">AND</b> pls1.Q <b style="color:#1c1cff">AND</b> HEARTBEAT&lt;&gt;<b style="color:#8a8a8a">16#05</b> <b style="color:#1c1cff">then</b></span>
<span class="t ln" style="left:420.53px;top:407.00px;width:40px;">21</span>
<div style="left:472.54px;top:409.00px;width:1px;height:10px;background:#808080;"></div>
<span class="t cl" style="left:485.29px;top:407.00px;">    <b style="color:#2a4ae4">CONMTSTART</b>( <b style="color:#8a8a8a">'can0'</b>, NodeID );</span>
<span class="t ln" style="left:420.53px;top:423.00px;width:40px;">22</span>
<div style="left:472.54px;top:425.00px;width:1px;height:10px;background:#808080;"></div>
<span class="t cl" style="left:485.29px;top:423.00px;">    <b style="color:#1c1cff">RETURN</b>;</span>
<span class="t ln" style="left:420.53px;top:439.00px;width:40px;">23</span>
<div style="left:472.54px;top:441.00px;width:1px;height:6px;background:#808080;"></div>
<div style="left:472.54px;top:446.00px;width:5px;height:1px;background:#808080;"></div>
<span class="t cl" style="left:485.29px;top:439.00px;"><b style="color:#1c1cff">end_if</b>;</span>
<span class="t ln" style="left:420.53px;top:455.00px;width:40px;">24</span>
<span class="t ln" style="left:420.53px;top:471.00px;width:40px;">25</span>
<span class="t cl" style="left:485.29px;top:471.00px;"><b style="color:#168a16">// STOP STATE</b></span>
<span class="t ln" style="left:420.53px;top:487.00px;width:40px;">26</span>
<svg style="left:468.04px;top:488.60px" width="10" height="10" viewBox="0 0 10 10"><rect x="0.5" y="0.5" width="9" height="9" fill="#fff" stroke="#808080"/><path d="M2.5 5h5" stroke="#404040" stroke-width="1"/></svg>
<span class="t cl" style="left:485.29px;top:487.00px;"><b style="color:#1c1cff">if</b> STOP_SL <b style="color:#1c1cff">then</b></span>
<span class="t ln" style="left:420.53px;top:503.00px;width:40px;">27</span>
<div style="left:472.54px;top:505.00px;width:1px;height:10px;background:#808080;"></div>
<span class="t cl" style="left:485.29px;top:503.00px;">    Node_STATE_cd:=<b style="color:#8a8a8a">3</b>;</span>
<span class="t ln" style="left:420.53px;top:519.00px;width:40px;">28</span>
<div style="left:472.54px;top:521.00px;width:1px;height:10px;background:#808080;"></div>
<span class="t cl" style="left:485.29px;top:519.00px;">    STOP_SL:=<b style="color:#1c1cff">FALSE</b>;</span>
<span class="t ln" style="left:420.53px;top:535.00px;width:40px;">29</span>
<div style="left:472.54px;top:537.00px;width:1px;height:6px;background:#808080;"></div>
<div style="left:472.54px;top:542.00px;width:5px;height:1px;background:#808080;"></div>
<span class="t cl" style="left:485.29px;top:535.00px;"><b style="color:#1c1cff">end_if</b>;</span>
<span class="t ln" style="left:420.53px;top:551.00px;width:40px;">30</span>
<svg style="left:468.04px;top:552.60px" width="10" height="10" viewBox="0 0 10 10"><rect x="0.5" y="0.5" width="9" height="9" fill="#fff" stroke="#808080"/><path d="M2.5 5h5" stroke="#404040" stroke-width="1"/></svg>
<span class="t cl" style="left:485.29px;top:551.00px;"><b style="color:#1c1cff">if</b> Node_STATE_cd=<b style="color:#8a8a8a">3</b> <b style="color:#1c1cff">AND</b> pls1.Q <b style="color:#1c1cff">AND</b> HEARTBEAT&lt;&gt;<b style="color:#8a8a8a">0</b> <b style="color:#1c1cff">then</b></span>
<span class="t ln" style="left:420.53px;top:567.00px;width:40px;">31</span>
<div style="left:472.54px;top:569.00px;width:1px;height:10px;background:#808080;"></div>
<span class="t cl" style="left:485.29px;top:567.00px;">    <b style="color:#2a4ae4">CONMTSTOP</b>( <b style="color:#8a8a8a">'can0'</b>, NodeID );</span>
<svg style="left:0;top:0" width="1600" height="864" viewBox="0 0 1600 864"><path d="M1226.24 95.30L1229.46 92.08L1232.68 95.30" fill="none" stroke="#505050" stroke-width="1.8"/></svg>
<svg style="left:0;top:0" width="1600" height="864" viewBox="0 0 1600 864"><path d="M1226.24 574.20L1229.46 577.42L1232.68 574.20" fill="none" stroke="#505050" stroke-width="1.8"/></svg>
<svg style="left:0;top:0" width="1600" height="864" viewBox="0 0 1600 864"><path d="M418.49 589.18L415.27 592.40L418.49 595.62" fill="none" stroke="#505050" stroke-width="1.8"/></svg>
<svg style="left:0;top:0" width="1600" height="864" viewBox="0 0 1600 864"><path d="M1212.32 589.18L1215.54 592.40L1212.32 595.62" fill="none" stroke="#505050" stroke-width="1.8"/></svg>
<svg style="left:1243.00px;top:85.50px" width="16.76" height="17.43" viewBox="0 0 13 13.5"><path d="M1 2.2h11L7.9 7v4.2H5.1V7z" fill="#5b8df0"/></svg>
<span class="t" style="left:1266.33px;top:86.31px;font-size:13px;line-height:18px;color:#3d5f9e;letter-spacing:0.291px;">Name</span>
<svg style="left:1262.47px;top:107.11px" width="10" height="12" viewBox="0 0 10 12"><path d="M7.8 2.2v7.2H0.6z" fill="#33415f"/></svg>
<svg style="left:1279.87px;top:104.91px" width="16" height="16" viewBox="0 0 16 16"><path d="M3.7 1.5h7.4l3.5 3.5v8.6H3.7z" fill="#fff" stroke="#2e2e2e" stroke-width="1.2"/><path d="M10.9 1.5v3.7h3.7z" fill="#2e2e2e"/><text x="4.7" y="11.0" font-family="Liberation Sans,sans-serif" font-weight="bold" font-size="6.2" fill="#28a428" textLength="7.6" lengthAdjust="spacingAndGlyphs">FB</text></svg>
<span class="t" style="left:1301.40px;top:104.52px;font-size:13px;line-height:18px;letter-spacing:-0.195px;">CAN_NMT_STATE_MACHINE (*CANopen slaves</span>
<svg style="left:1262.47px;top:251.11px" width="10" height="12" viewBox="0 0 10 12"><path d="M7.8 2.2v7.2H0.6z" fill="#33415f"/></svg>
<svg style="left:1281.55px;top:248.91px" width="16" height="16" viewBox="0 0 16 16"><path d="M2 14.6V6.4L7.4 1.6l5.4 4.8v8.2z" fill="#fff" stroke="#1a1a1a" stroke-width="1.8"/><path d="M5.4 14.6V9.6c0-1.5 4-1.5 4 0v5" fill="none" stroke="#1a1a1a" stroke-width="1.6"/></svg>
<span class="t" style="left:1301.40px;top:248.52px;font-size:13px;line-height:18px;letter-spacing:-0.204px;">Global variables</span>
<span class="t" style="left:1272.01px;top:122.39px;font-size:13px;line-height:18px;letter-spacing:-0.299px;">HEARTBEAT</span>
<span class="t" style="left:1272.01px;top:140.39px;font-size:13px;line-height:18px;letter-spacing:-0.267px;">Node_STATE_cd</span>
<span class="t" style="left:1272.01px;top:158.39px;font-size:13px;line-height:18px;letter-spacing:-0.257px;">NodeID</span>
<span class="t" style="left:1272.01px;top:176.39px;font-size:13px;line-height:18px;letter-spacing:-0.209px;">pls1</span>
<span class="t" style="left:1272.01px;top:194.39px;font-size:13px;line-height:18px;letter-spacing:-0.282px;">START_SL</span>
<span class="t" style="left:1272.01px;top:212.39px;font-size:13px;line-height:18px;letter-spacing:-0.280px;">STATE</span>
<span class="t" style="left:1272.01px;top:230.39px;font-size:13px;line-height:18px;letter-spacing:-0.291px;">STOP_SL</span>
<span class="t" style="left:1272.01px;top:266.39px;font-size:13px;line-height:18px;letter-spacing:-0.215px;">AI</span>
<span class="t" style="left:1272.01px;top:284.39px;font-size:13px;line-height:18px;letter-spacing:-0.329px;">AO</span>
<span class="t" style="left:1272.01px;top:302.39px;font-size:13px;line-height:18px;letter-spacing:-0.245px;">CAN_bus_off</span>
<span class="t" style="left:1272.01px;top:320.39px;font-size:13px;line-height:18px;letter-spacing:-0.242px;">CAN_error</span>
<span class="t" style="left:1272.01px;top:338.39px;font-size:13px;line-height:18px;letter-spacing:-0.234px;">CAN_hard_control</span>
<span class="t" style="left:1272.01px;top:356.39px;font-size:13px;line-height:18px;letter-spacing:-0.290px;">CAN_HMI1_VCU1</span>
<span class="t" style="left:1272.01px;top:374.39px;font-size:13px;line-height:18px;letter-spacing:-0.294px;">CAN_RIOM1_VCU2</span>
<svg style="left:0;top:0" width="1600" height="864" viewBox="0 0 1600 864"><path d="M1586.21 113.90L1589.43 110.68L1592.65 113.90" fill="none" stroke="#505050" stroke-width="1.8"/></svg>
<svg style="left:0;top:0" width="1600" height="864" viewBox="0 0 1600 864"><path d="M1586.21 385.39L1589.43 388.61L1592.65 385.39" fill="none" stroke="#505050" stroke-width="1.8"/></svg>
<svg style="left:0;top:0" width="1600" height="864" viewBox="0 0 1600 864"><path d="M1269.42 400.75L1266.20 403.97L1269.42 407.19" fill="none" stroke="#505050" stroke-width="1.8"/></svg>
<svg style="left:0;top:0" width="1600" height="864" viewBox="0 0 1600 864"><path d="M1571.13 400.75L1574.35 403.97L1571.13 407.19" fill="none" stroke="#505050" stroke-width="1.8"/></svg>
<svg style="left:1247.77px;top:420.62px" width="10" height="12" viewBox="0 0 10 12"><path d="M2.2 1.2l4.4 4.4-4.4 4.4z" fill="#fff" stroke="#5a6c9c" stroke-width="1.1"/></svg>
<svg style="left:1267.88px;top:417.62px" width="16" height="16" viewBox="0 0 16 16"><path d="M1.4 1.6h6.2l1 1.6h5.8v11.4H1.4z" fill="#fdb900"/><rect x="2.6" y="2.6" width="4.4" height="1.4" fill="#fde08a"/></svg>
<span class="t" style="left:1289.93px;top:419.72px;font-size:11px;line-height:15px;letter-spacing:-0.196px;">(All)</span>
<svg style="left:1247.77px;top:438.62px" width="10" height="12" viewBox="0 0 10 12"><path d="M2.2 1.2l4.4 4.4-4.4 4.4z" fill="#fff" stroke="#5a6c9c" stroke-width="1.1"/></svg>
<svg style="left:1267.88px;top:435.62px" width="16" height="16" viewBox="0 0 16 16"><path d="M1.4 1.6h6.2l1 1.6h5.8v11.4H1.4z" fill="#fdb900"/><rect x="2.6" y="2.6" width="4.4" height="1.4" fill="#fde08a"/></svg>
<span class="t" style="left:1289.93px;top:437.72px;font-size:11px;line-height:15px;letter-spacing:-0.231px;">(Project)</span>
<svg style="left:1247.77px;top:456.62px" width="10" height="12" viewBox="0 0 10 12"><path d="M2.2 1.2l4.4 4.4-4.4 4.4z" fill="#fff" stroke="#5a6c9c" stroke-width="1.1"/></svg>
<svg style="left:1267.88px;top:453.62px" width="16" height="16" viewBox="0 0 16 16"><path d="M1.4 1.6h6.2l1 1.6h5.8v11.4H1.4z" fill="#fdb900"/><rect x="2.6" y="2.6" width="4.4" height="1.4" fill="#fde08a"/></svg>
<span class="t" style="left:1289.93px;top:455.72px;font-size:11px;line-height:15px;letter-spacing:-0.306px;">Advanced</span>
<svg style="left:1247.77px;top:474.62px" width="10" height="12" viewBox="0 0 10 12"><path d="M2.2 1.2l4.4 4.4-4.4 4.4z" fill="#fff" stroke="#5a6c9c" stroke-width="1.1"/></svg>
<svg style="left:1267.88px;top:471.62px" width="16" height="16" viewBox="0 0 16 16"><path d="M1.4 1.6h6.2l1 1.6h5.8v11.4H1.4z" fill="#fdb900"/><rect x="2.6" y="2.6" width="4.4" height="1.4" fill="#fde08a"/></svg>
<span class="t" style="left:1289.93px;top:473.72px;font-size:11px;line-height:15px;letter-spacing:-0.245px;">Arithmetic</span>
<svg style="left:1247.77px;top:492.62px" width="10" height="12" viewBox="0 0 10 12"><path d="M2.2 1.2l4.4 4.4-4.4 4.4z" fill="#fff" stroke="#5a6c9c" stroke-width="1.1"/></svg>
<svg style="left:1267.88px;top:489.62px" width="16" height="16" viewBox="0 0 16 16"><path d="M1.4 1.6h6.2l1 1.6h5.8v11.4H1.4z" fill="#fdb900"/><rect x="2.6" y="2.6" width="4.4" height="1.4" fill="#fde08a"/></svg>
<span class="t" style="left:1289.93px;top:491.72px;font-size:11px;line-height:15px;letter-spacing:-0.265px;">Arrays</span>
<svg style="left:1247.77px;top:510.62px" width="10" height="12" viewBox="0 0 10 12"><path d="M2.2 1.2l4.4 4.4-4.4 4.4z" fill="#fff" stroke="#5a6c9c" stroke-width="1.1"/></svg>
<svg style="left:1267.88px;top:507.62px" width="16" height="16" viewBox="0 0 16 16"><path d="M1.4 1.6h6.2l1 1.6h5.8v11.4H1.4z" fill="#fdb900"/><rect x="2.6" y="2.6" width="4.4" height="1.4" fill="#fde08a"/></svg>
<span class="t" style="left:1289.93px;top:509.72px;font-size:11px;line-height:15px;letter-spacing:-0.252px;">AS-interface</span>
<svg style="left:1247.77px;top:528.62px" width="10" height="12" viewBox="0 0 10 12"><path d="M2.2 1.2l4.4 4.4-4.4 4.4z" fill="#fff" stroke="#5a6c9c" stroke-width="1.1"/></svg>
<svg style="left:1267.88px;top:525.62px" width="16" height="16" viewBox="0 0 16 16"><path d="M1.4 1.6h6.2l1 1.6h5.8v11.4H1.4z" fill="#fdb900"/><rect x="2.6" y="2.6" width="4.4" height="1.4" fill="#fde08a"/></svg>
<span class="t" style="left:1289.93px;top:527.72px;font-size:11px;line-height:15px;letter-spacing:-0.316px;">BACnet</span>
<svg style="left:1247.77px;top:546.62px" width="10" height="12" viewBox="0 0 10 12"><path d="M2.2 1.2l4.4 4.4-4.4 4.4z" fill="#fff" stroke="#5a6c9c" stroke-width="1.1"/></svg>
<svg style="left:1267.88px;top:543.62px" width="16" height="16" viewBox="0 0 16 16"><path d="M1.4 1.6h6.2l1 1.6h5.8v11.4H1.4z" fill="#fdb900"/><rect x="2.6" y="2.6" width="4.4" height="1.4" fill="#fde08a"/></svg>
<span class="t" style="left:1289.93px;top:545.72px;font-size:11px;line-height:15px;letter-spacing:-0.287px;">Booleans</span>
<svg style="left:1247.77px;top:564.62px" width="10" height="12" viewBox="0 0 10 12"><path d="M2.2 1.2l4.4 4.4-4.4 4.4z" fill="#fff" stroke="#5a6c9c" stroke-width="1.1"/></svg>
<svg style="left:1267.88px;top:561.62px" width="16" height="16" viewBox="0 0 16 16"><path d="M1.4 1.6h6.2l1 1.6h5.8v11.4H1.4z" fill="#fdb900"/><rect x="2.6" y="2.6" width="4.4" height="1.4" fill="#fde08a"/></svg>
<span class="t" style="left:1289.93px;top:563.72px;font-size:11px;line-height:15px;letter-spacing:-0.341px;">CANbus</span>
<svg style="left:0;top:0" width="1600" height="864" viewBox="0 0 1600 864"><path d="M1586.21 427.99L1589.43 424.77L1592.65 427.99" fill="none" stroke="#505050" stroke-width="1.8"/></svg>
<svg style="left:0;top:0" width="1600" height="864" viewBox="0 0 1600 864"><path d="M1586.21 571.10L1589.43 574.32L1592.65 571.10" fill="none" stroke="#505050" stroke-width="1.8"/></svg>
<svg style="left:0;top:0" width="1600" height="864" viewBox="0 0 1600 864"><path d="M1254.13 588.03L1250.05 591.43L1254.13 594.83z" fill="#111"/></svg>
<svg style="left:0;top:0" width="1600" height="864" viewBox="0 0 1600 864"><path d="M1266.42 588.03L1270.50 591.43L1266.42 594.83z" fill="#111"/></svg>
<svg style="left:0;top:0" width="1600" height="864" viewBox="0 0 1600 864"><path d="M1277.94 582.33H1340.60L1324.61 600.54H1277.94z" fill="#ffebb4"/></svg>
<span class="t" style="left:1289.54px;top:585.68px;font-size:11px;line-height:15px;color:#1c3f94;font-weight:bold;letter-spacing:0.219px;">Blocks</span>
<span class="t" style="left:1346.27px;top:585.68px;font-size:11px;line-height:15px;color:#fff;letter-spacing:-0.245px;">Spylist</span>
<span class="t" style="left:1398.36px;top:585.68px;font-size:11px;line-height:15px;color:#fff;letter-spacing:-0.142px;">Define</span>
<span class="t" style="left:1449.41px;top:585.68px;font-size:11px;line-height:15px;color:#fff;letter-spacing:-0.233px;">ENUM</span>
<svg style="left:0;top:0" width="1600" height="864" viewBox="0 0 1600 864"><path d="M396.69 608.12L392.61 611.52L396.69 614.92z" fill="#111"/><rect x="391.01" y="608.12" width="1.5" height="6.80" fill="#111"/></svg>
<svg style="left:0;top:0" width="1600" height="864" viewBox="0 0 1600 864"><path d="M413.97 608.12L409.89 611.52L413.97 614.92z" fill="#111"/></svg>
<svg style="left:0;top:0" width="1600" height="864" viewBox="0 0 1600 864"><path d="M427.16 608.12L431.24 611.52L427.16 614.92z" fill="#111"/></svg>
<svg style="left:0;top:0" width="1600" height="864" viewBox="0 0 1600 864"><path d="M444.44 608.12L448.52 611.52L444.44 614.92z" fill="#111"/><rect x="448.62" y="608.12" width="1.5" height="6.80" fill="#111"/></svg>
<span class="t" style="left:483.22px;top:604.53px;font-size:11px;line-height:15px;color:#fff;letter-spacing:-0.182px;">...RAIN_VIEW_CAN_ARCHITECTURE</span>
<svg style="left:0;top:0" width="1600" height="864" viewBox="0 0 1600 864"><path d="M687.45 602.35H924.03L907.01 620.81H687.45z" fill="#ffebb4"/></svg>
<span class="t" style="left:700.47px;top:604.53px;font-size:11px;line-height:15px;color:#1c3f94;font-weight:bold;letter-spacing:0.754px;">...AN - CAN_NMT_STATE_MACHINE</span>
<span class="t" style="left:936.02px;top:604.53px;font-size:11px;line-height:15px;color:#fff;letter-spacing:-0.261px;">VCU1_CAN - VCU_ACTIVITY</span>
<span class="t" style="left:389.75px;top:626.62px;font-size:11px;line-height:15px;color:#15428b;font-weight:bold;letter-spacing:-0.084px;">Build</span>
<svg style="left:1580.66px;top:626.88px" width="15.47" height="14.85" viewBox="1226 485 12 11.5"><path d="M1227.6 486.4l8.4 8.2M1236 486.4l-8.4 8.2" stroke="#1c3f94" stroke-width="1.7" fill="none"/></svg>
<span class="t" style="left:389.88px;top:644.18px;font-size:11px;line-height:15px;letter-spacing:-0.217px;">&lt; Call stack depth = 1 &gt;</span>
<span class="t" style="left:389.88px;top:662.18px;font-size:11px;line-height:15px;letter-spacing:-0.032px;">&lt; 300 BOOL/SINT; 18 INT; 65 DINT/REAL; 0 LINT/LREAL; 8 TIME; 7 STRING;  - CRC = 460202b7 &gt;</span>
<span class="t" style="left:389.88px;top:680.18px;font-size:11px;line-height:15px;letter-spacing:-0.234px;">On Line Change is disabled</span>
<span class="t" style="left:389.88px;top:698.18px;font-size:11px;line-height:15px;letter-spacing:-0.238px;">&lt; CT Segment = 156 byte(s) &gt;</span>
<span class="t" style="left:389.88px;top:716.18px;font-size:11px;line-height:15px;letter-spacing:-0.227px;">&lt; 236 I/Os &gt;</span>
<span class="t" style="left:389.88px;top:734.18px;font-size:11px;line-height:15px;letter-spacing:-0.220px;">Relocating code...</span>
<span class="t" style="left:389.88px;top:752.18px;font-size:11px;line-height:15px;letter-spacing:-0.251px;">&lt; Code CRC=864dceb7 - File CRC=89fad1e4 - Size=10056 &gt;</span>
<span class="t" style="left:389.88px;top:770.18px;font-size:11px;line-height:15px;letter-spacing:-0.241px;">&lt; 10 POUs - 6 programs, 2 sub-programs, 2 UDFBs &gt;</span>
<span class="t" style="left:389.88px;top:788.18px;font-size:11px;line-height:15px;letter-spacing:-0.227px;">No error detected</span>
<svg style="left:0;top:0" width="1600" height="864" viewBox="0 0 1600 864"><path d="M1586.21 652.19L1589.43 648.97L1592.65 652.19" fill="none" stroke="#505050" stroke-width="1.8"/></svg>
<svg style="left:0;top:0" width="1600" height="864" viewBox="0 0 1600 864"><path d="M1586.21 811.06L1589.43 814.28L1592.65 811.06" fill="none" stroke="#505050" stroke-width="1.8"/></svg>
<svg style="left:0;top:0" width="1600" height="864" viewBox="0 0 1600 864"><path d="M397.37 828.05L393.29 831.45L397.37 834.85z" fill="#111"/></svg>
<svg style="left:0;top:0" width="1600" height="864" viewBox="0 0 1600 864"><path d="M411.14 828.05L415.22 831.45L411.14 834.85z" fill="#111"/></svg>
<svg style="left:0;top:0" width="1600" height="864" viewBox="0 0 1600 864"><path d="M422.11 822.67H476.65L459.89 840.50H422.11z" fill="#ffebb4"/></svg>
<span class="t" style="left:434.88px;top:824.21px;font-size:11px;line-height:15px;color:#1c3f94;font-weight:bold;letter-spacing:-0.007px;">Build</span>
<span class="t" style="left:485.54px;top:824.21px;font-size:11px;line-height:15px;color:#fff;letter-spacing:-0.335px;">Cross references</span>
<span class="t" style="left:592.55px;top:824.21px;font-size:11px;line-height:15px;color:#fff;letter-spacing:-0.340px;">Call tree</span>
<span class="t" style="left:653.54px;top:824.21px;font-size:11px;line-height:15px;color:#fff;letter-spacing:-0.068px;">Runtime</span>
<span class="t" style="left:716.20px;top:824.21px;font-size:11px;line-height:15px;color:#fff;letter-spacing:-0.320px;">Call stack</span>
<span class="t" style="left:787.75px;top:824.21px;font-size:11px;line-height:15px;color:#fff;letter-spacing:-0.147px;">Breakpoints</span>
<span class="t" style="left:874.65px;top:824.21px;font-size:11px;line-height:15px;color:#fff;letter-spacing:-0.232px;">Digital sampling trace</span>
<span class="t" style="left:1004.61px;top:824.21px;font-size:11px;line-height:15px;color:#fff;letter-spacing:-0.623px;">Prompt</span>
<span class="t" style="left:1057.21px;top:824.21px;font-size:11px;line-height:15px;color:#fff;letter-spacing:-0.404px;">HMI</span>
<span class="t" style="left:1099.24px;top:824.21px;font-size:11px;line-height:15px;color:#fff;letter-spacing:-0.230px;">Code Checker</span>
<span class="t" style="left:0.39px;top:846.04px;font-size:11px;line-height:15px;color:#1f4e9c;letter-spacing:-1.202px;">Ready</span>
<span class="t" style="left:167.86px;top:846.04px;font-size:11px;line-height:15px;color:#1f4e9c;letter-spacing:-0.257px;">Custom</span>
<span class="t" style="left:305.95px;top:846.04px;font-size:11px;line-height:15px;color:#1f4e9c;letter-spacing:0.049px;">Default</span>
<span class="t" style="left:574.25px;top:846.04px;font-size:11px;line-height:15px;color:#1f4e9c;letter-spacing:-0.397px;">OffLine</span>
<span class="t" style="left:616.92px;top:846.04px;font-size:11px;line-height:15px;color:#1f4e9c;letter-spacing:0.071px;">192.168.1.210:502</span>
<span class="t" style="left:796.78px;top:846.04px;font-size:11px;line-height:15px;color:#1f4e9c;letter-spacing:-0.017px;">0 , 180</span>
<span class="t" style="left:889.22px;top:846.04px;font-size:11px;line-height:15px;color:#1f4e9c;letter-spacing:0.027px;">379 x 18</span>
<span class="t" style="left:953.94px;top:846.04px;font-size:11px;line-height:15px;color:#1f4e9c;letter-spacing:0.361px;">0,0</span>
<span class="t" style="left:1040.71px;top:846.04px;font-size:11px;line-height:15px;color:#1f4e9c;letter-spacing:0.090px;">100%</span>
<svg style="left:0.77px;top:47.66px" width="16" height="16" viewBox="0 0 16 16"><path d="M2 3h6l1.2 1.6H15.6V15.4H2z" fill="#fdb900"/></svg>
<svg style="left:32.75px;top:47.66px" width="16" height="16" viewBox="0 0 16 16"><path d="M1.2 1.6h13.6v13.8H1.2z" fill="#2b3ea6"/><rect x="6.4" y="1.6" width="6" height="4" fill="#eef0f8"/><rect x="9.6" y="2.2" width="1.8" height="2.6" fill="#2b3ea6"/></svg>
<svg style="left:54.92px;top:47.66px" width="17" height="16" viewBox="0 0 17 16"><path d="M1.6 1.8h8.4l3.6 3.6v9.6H1.6z" fill="#fff" stroke="#222" stroke-width="1.3"/><path d="M9.6 1.8v4h4z" fill="#222"/><path d="M3.6 7h6M3.6 9.2h6M3.6 11.4h6" stroke="#4a62c8" stroke-width="1.2"/><path d="M8.6 8.6l2.8 4.4 3.8-8.4" stroke="#1a2fe0" stroke-width="1.8" fill="none"/></svg>
<svg style="left:86.64px;top:47.66px" width="16" height="16" viewBox="0 0 16 16"><rect x="3.6" y="1.6" width="8.8" height="4" fill="#fff" stroke="#111" stroke-width="1.2"/><rect x="1" y="4.6" width="14" height="6.6" rx="1" fill="#111"/><rect x="3.6" y="9.6" width="8.8" height="4.6" fill="#fff" stroke="#111" stroke-width="1.2"/><circle cx="12.4" cy="7.2" r="1" fill="#20d040"/></svg>
<svg style="left:119.65px;top:47.66px" width="16" height="16" viewBox="0 0 16 16"><path d="M4.2 1.4L10 10.6M11.8 1.4L6 10.6" stroke="#111" stroke-width="1.5" fill="none"/><circle cx="4.6" cy="12.6" r="2.1" fill="none" stroke="#111" stroke-width="1.3"/><circle cx="11.4" cy="12.6" r="2.1" fill="none" stroke="#111" stroke-width="1.3"/></svg>
<svg style="left:142.34px;top:47.66px" width="16" height="16" viewBox="0 0 16 16"><path d="M1.8 1.6h6.2v9.4H1.8z" fill="#fff" stroke="#111" stroke-width="1.3"/><path d="M5.6 4.8h7.2v10H5.6z" fill="#fff" stroke="#111" stroke-width="1.3"/></svg>
<svg style="left:162.97px;top:47.66px" width="16" height="16" viewBox="0 0 16 16"><path d="M1.2 2h9v9h-9z" fill="#c3c8d2" stroke="#a9adb5" stroke-width="1"/><path d="M4.2 5h10.6v10H4.2z" fill="#eceef2" stroke="#a9adb5" stroke-width="1.2"/><path d="M6.4 9h6.4M6.4 11.6h6.4" stroke="#a9adb5" stroke-width="1.2"/></svg>
<svg style="left:186.43px;top:47.66px" width="16" height="16" viewBox="0 0 16 16"><path d="M1.6 1.6l12.6 12.6M14.2 1.6L1.6 14.2" stroke="#111" stroke-width="2" fill="none"/></svg>
<svg style="left:209.38px;top:47.66px" width="16" height="16" viewBox="0 0 16 16"><path d="M1 3.4h10M1 7.2h7M1 11h5M6.4 2.4l8 11.2M14.6 5L6 13.6" stroke="#a9adb5" stroke-width="1.5" fill="none"/></svg>
<svg style="left:240.32px;top:47.66px" width="16" height="16" viewBox="0 0 16 16"><path d="M2 1.2h3M2 3.4h3" stroke="#a9adb5" stroke-width="1.2"/><rect x="3.4" y="5" width="11" height="6.4" rx="1" fill="#eef0f4" stroke="#a9adb5" stroke-width="1.3"/><path d="M1 8.2h2.4" stroke="#a9adb5" stroke-width="1.2"/></svg>
<svg style="left:271.78px;top:47.66px" width="16" height="16" viewBox="0 0 16 16"><path d="M4.4 6.6C6.6 2.4 13 3.6 12.4 8.4c-.4 2.8-2.4 4.6-4.8 5.4" stroke="#a9adb5" stroke-width="2" fill="none"/><path d="M1.6 3l1.4 6 5-3.2z" fill="#a9adb5"/></svg>
<svg style="left:294.73px;top:47.66px" width="16" height="16" viewBox="0 0 16 16"><path d="M11.6 6.6C9.4 2.4 3 3.6 3.6 8.4c.3 2.4 1.8 3.8 3.6 4.6" stroke="#a9adb5" stroke-width="1.6" fill="none"/><path d="M14.4 3L13 9 8 5.8z" fill="#a9adb5"/></svg>
<svg style="left:324.90px;top:47.66px" width="16" height="16" viewBox="0 0 16 16"><rect x="1.4" y="2.4" width="13" height="12" rx="1" fill="#fff" stroke="#111" stroke-width="1.5"/><path d="M7.9 2.4v12M1.4 8.4h13" stroke="#111" stroke-width="1.3"/><rect x="8.6" y="3.2" width="5" height="4.5" fill="#3a9be8"/></svg>
<svg style="left:348.88px;top:47.66px" width="16" height="16" viewBox="0 0 16 16"><path d="M6 0.4v4.4M3.8 2.6L6 5.2l2.2-2.6z" stroke="#1a2fe0" stroke-width="1.3" fill="#1a2fe0"/><path d="M10 1.4v3M12.6 1.4v3M10 1.4l2.6 1.4" stroke="#333" stroke-width="0.9" fill="none"/><rect x="1" y="6" width="14" height="9.4" rx="1.2" fill="#444"/><path d="M3.4 7.4v7M6.4 7.4v7M9.4 7.4v7M12.4 7.4v7" stroke="#4ce04c" stroke-width="1.7"/></svg>
<svg style="left:530.67px;top:47.66px" width="16" height="16" viewBox="0 0 16 16"><rect x="0.4" y="1.4" width="3" height="13.6" fill="#d2d7df"/><rect x="3.3" y="1.4" width="1.1" height="13.6" fill="#3c3c3c"/><ellipse cx="1.7999999999999998" cy="3.6" rx="1.5" ry="1.2" fill="#2050e0"/><ellipse cx="1.7999999999999998" cy="8.2" rx="1.5" ry="1.2" fill="#90d898"/><ellipse cx="1.7999999999999998" cy="12.8" rx="1.5" ry="1.2" fill="#10b020"/><rect x="4.2" y="1.4" width="3" height="13.6" fill="#d2d7df"/><rect x="7.1" y="1.4" width="1.1" height="13.6" fill="#3c3c3c"/><ellipse cx="5.6" cy="3.6" rx="1.5" ry="1.2" fill="#10b020"/><ellipse cx="5.6" cy="8.2" rx="1.5" ry="1.2" fill="#f0a0a0"/><ellipse cx="5.6" cy="12.8" rx="1.5" ry="1.2" fill="#10b020"/><rect x="8.0" y="1.4" width="3" height="13.6" fill="#d2d7df"/><rect x="10.9" y="1.4" width="1.1" height="13.6" fill="#3c3c3c"/><ellipse cx="9.4" cy="3.6" rx="1.5" ry="1.2" fill="#10b020"/><ellipse cx="9.4" cy="8.2" rx="1.5" ry="1.2" fill="#90d898"/><ellipse cx="9.4" cy="12.8" rx="1.5" ry="1.2" fill="#f02020"/><rect x="11.8" y="1.4" width="3" height="13.6" fill="#d2d7df"/><rect x="14.700000000000001" y="1.4" width="1.1" height="13.6" fill="#3c3c3c"/><ellipse cx="13.200000000000001" cy="3.6" rx="1.5" ry="1.2" fill="#10b020"/><ellipse cx="13.200000000000001" cy="8.2" rx="1.5" ry="1.2" fill="#90d898"/><ellipse cx="13.200000000000001" cy="12.8" rx="1.5" ry="1.2" fill="#f02020"/></svg>
<svg style="left:553.62px;top:47.66px" width="16" height="16" viewBox="0 0 16 16"><g transform="translate(0.5,1) scale(0.9)"><rect x="5.2" y="1" width="5.6" height="5" fill="#1d3fd0" stroke="#111" stroke-width="1"/><path d="M8 6v3.2M2.6 12V9.4h10.8V12M8 9.4V12" stroke="#111" stroke-width="1.4" fill="none"/><rect x="0.6" y="11.4" width="4" height="3.4" fill="#111"/><rect x="6" y="11.4" width="4" height="3.4" fill="#111"/><rect x="11.4" y="11.4" width="4" height="3.4" fill="#111"/></g></svg>
<svg style="left:576.31px;top:47.66px" width="16" height="16" viewBox="0 0 16 16"><rect x="1" y="1" width="5" height="7.4" rx="1.6" fill="#1a2fe0" stroke="#111" stroke-width="1"/><rect x="10" y="7.4" width="5" height="7.4" rx="1.6" fill="#e01818" stroke="#111" stroke-width="1"/><path d="M6 3.6h5.4v4M6 6.4h2.4v5.8h1.8" stroke="#111" stroke-width="1.2" fill="none"/></svg>
<svg style="left:599.26px;top:47.66px" width="16" height="16" viewBox="0 0 16 16"><path d="M2 4.6C2 1 13.6 1 13.6 4.8V9l-1.2 1.2v4.2H5.6l-1-2.6L2 11z" fill="#f4ead8" stroke="#111" stroke-width="1.4"/><path d="M2 4.6C3 1.4 12 1 13.4 4.6L7.6 5.4 6.4 9.6 3 9.8z" fill="#222"/><path d="M8.6 7.4h3M9 12h2.6" stroke="#111" stroke-width="1"/></svg>
<svg style="left:622.47px;top:47.66px" width="16" height="16" viewBox="0 0 16 16"><path d="M2.6 8.2V15h10.8V8.2" fill="#fff" stroke="#8a96a8" stroke-width="1.1"/><path d="M0.8 8.6L8 1.6l7.2 7" fill="none" stroke="#e9a818" stroke-width="2.2" stroke-linejoin="miter"/><rect x="11" y="2" width="2" height="3.4" fill="#e9a818"/><rect x="6.6" y="9.6" width="3" height="5" fill="#e9a818"/></svg>
<svg style="left:645.41px;top:47.66px" width="16" height="16" viewBox="0 0 16 16"><rect x="2.6" y="1.5" width="2.2" height="13" fill="#333"/><rect x="4.8" y="1.8" width="6.6" height="3" fill="#c81e1e"/><rect x="4.8" y="6.8" width="3.8" height="2.6" fill="#2a5ad8"/><rect x="4.8" y="11.4" width="6.6" height="2.8" fill="#f0b428"/></svg>
<svg style="left:667.59px;top:47.66px" width="17" height="16" viewBox="0 0 17 16"><text x="0" y="12.6" font-family="Liberation Sans,sans-serif" font-weight="bold" font-size="14.5" fill="#1a3fd0">§</text><text x="8.2" y="13.2" font-family="Liberation Sans,sans-serif" font-weight="bold" font-size="11.5" fill="#1a3fd0">g</text></svg>
<svg style="left:699.31px;top:47.66px" width="16" height="16" viewBox="0 0 16 16"><rect x="1.2" y="4.4" width="11" height="10.4" rx="1" fill="#fff" stroke="#111" stroke-width="1.4"/><path d="M6.7 4.4v10.4M1.2 9.6h11" stroke="#111" stroke-width="1.2"/><rect x="8" y="1" width="7" height="6.2" fill="#5ab4f0" stroke="#111" stroke-width="1"/></svg>
<svg style="left:721.48px;top:47.66px" width="16" height="16" viewBox="0 0 16 16"><path d="M1 1.2l7 3.4-3 .8-.8 3z" fill="#111"/><path d="M6.4 7.4l8-3.4v3l-6 2.4z" fill="#e8a820"/><rect x="4.6" y="9" width="10.4" height="6" fill="#555"/><path d="M6 10.8h7.6M6 13h7.6" stroke="#ddd" stroke-width="1" stroke-dasharray="1.2 1"/></svg>
<svg style="left:744.43px;top:47.66px" width="16" height="16" viewBox="0 0 16 16"><path d="M5 3.4h7.4v8H5z" fill="#666"/><path d="M5 3.4L8.4 1.6h4v1.8" fill="#333"/><path d="M1.6 14.6c.4-4 2-6 4.6-6.6" stroke="#333" stroke-width="1.6" fill="none"/><path d="M14.8 1.4v8.4" stroke="#28c840" stroke-width="1.8"/></svg>
<svg style="left:767.90px;top:47.66px" width="16" height="16" viewBox="0 0 16 16"><circle cx="7.6" cy="8.4" r="5.4" fill="#1c55d8"/></svg>
<svg style="left:387.04px;top:89.38px" width="20" height="16" viewBox="0 0 20 16"><path d="M1 9.4h3M16.4 9.4h3" stroke="#3a50c0" stroke-width="1.2"/><rect x="4" y="6" width="12.4" height="6.8" rx="2.4" fill="#fff" stroke="#3a50c0" stroke-width="1.5"/><g fill="#f0b020"><circle cx="3" cy="2.4" r="1.7"/><circle cx="6.6" cy="2.4" r="1.7"/><circle cx="3" cy="5.8" r="1.7"/><circle cx="6.6" cy="5.8" r="1.7"/></g></svg>
<svg style="left:387.04px;top:108.49px" width="20" height="16" viewBox="0 0 20 16"><path d="M2 9h3M15 9h3.4" stroke="#3a50c0" stroke-width="1.2"/><rect x="5" y="3" width="10" height="11.4" fill="#fff" stroke="#3a50c0" stroke-width="1.6"/><g transform="translate(1.2,1.6)"><g fill="#f0b020"><circle cx="3" cy="2.4" r="1.7"/><circle cx="6.6" cy="2.4" r="1.7"/><circle cx="3" cy="5.8" r="1.7"/><circle cx="6.6" cy="5.8" r="1.7"/></g></g></svg>
<span class="t" style="left:388.85px;top:130.70px;font-size:5.8px;line-height:7px;font-weight:bold;color:#2a6ad8;letter-spacing:0.1px;">IF<br>THEN</span>
<svg style="left:387.04px;top:160.41px" width="20" height="16" viewBox="0 0 20 16"><path d="M3 2.8h1.6M6.4 2.8h10M8.6 12.6h8M3.6 15h13" stroke="#222" stroke-width="1.1"/><path d="M6.4 6h10M6.4 9.6h10" stroke="#20d8e8" stroke-width="1.5"/></svg>
<svg style="left:387.04px;top:182.62px" width="20" height="16" viewBox="0 0 20 16"><path d="M7 10h10" stroke="#20d8e8" stroke-width="1.5"/><path d="M8.6 12.9h8M3.6 15.4h13" stroke="#222" stroke-width="1.1"/><path d="M6 4.6c2-3.4 8-2.4 8 1.4 0 2.4-3 3.4-5 2.4" stroke="#108878" stroke-width="1.6" fill="none"/><path d="M3 3.4l4.4.2-2 3.4z" fill="#108878"/></svg>
<span class="t" style="left:388.07px;top:210.51px;font-size:11px;line-height:16px;font-weight:bold;color:#111;">b<span style="color:#2a50c8;background:#b0bce0;font-size:11.5px;letter-spacing:-0.2px;margin-left:1px;">11</span></span>
<svg style="left:387.04px;top:239.71px" width="20" height="16" viewBox="0 0 20 16"><g fill="#eef0f4" stroke="#9aa0aa" stroke-width="1.1"><rect x="3.6" y="2" width="4.4" height="4.4"/><rect x="11" y="8.6" width="4.4" height="4.4"/><rect x="2.6" y="10.2" width="3" height="2.4"/></g><path d="M1 4.2h2.6M8 4.2h1.6v6.6h1.4M5.6 11.4h2M15.4 10.8h3" stroke="#9aa0aa" stroke-width="1.1" fill="none"/></svg>
<svg style="left:387.04px;top:267.60px" width="20" height="16" viewBox="0 0 20 16"><path d="M6.6 0.6v15" stroke="#444" stroke-width="0.9"/><path d="M8 4.4h9M8 7.6h9M8 10.8h9M3 14h8" stroke="#111" stroke-width="1.5"/><path d="M1 7.6h4" stroke="#2a6ad8" stroke-width="1.6"/><path d="M4.2 5l3 2.6-3 2.6z" fill="#2a6ad8"/></svg>
<svg style="left:387.04px;top:297.56px" width="20" height="16" viewBox="0 0 20 16"><path d="M7.6 2.8h8.6M7.6 6.2h6.6M7.6 9.6h8.6M7.6 13h6.6" stroke="#222" stroke-width="1.4"/><path d="M4.4 14.6V3.4" stroke="#4a9ae8" stroke-width="1.6"/><path d="M2.6 4.6l1.8-3 2.4 1.4" stroke="#4a9ae8" stroke-width="1.2" fill="none"/></svg>
<svg style="left:763.90px;top:842.82px" width="18.05" height="17.43" viewBox="0 0 14 13.5"><path d="M2.4 12.2l1-3.4 7-7 2.2 2.2-7 7z" fill="#d03030"/><path d="M2.4 12.2l1-3.4 2.2 2.2z" fill="#f0c8a0"/><path d="M1 12.8h10.4" stroke="#222" stroke-width="0.9"/></svg>
</div></body></html>
